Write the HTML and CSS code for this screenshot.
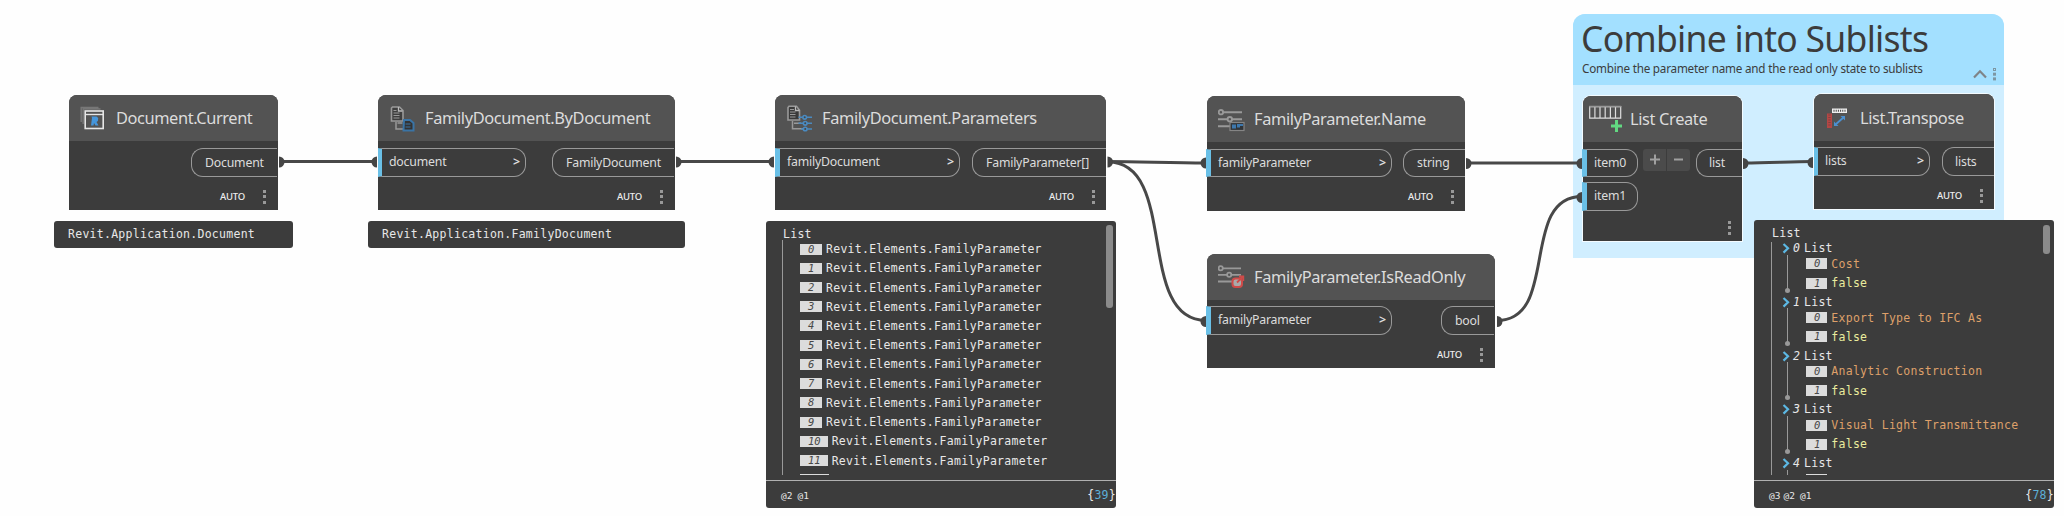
FILE: index.html
```
<!DOCTYPE html>
<html lang="en">
<head>
<meta charset="utf-8">
<title>Graph</title>
<link rel="stylesheet" href="styles.css">
</head>
<body>
<main class="canvas">
  <section class="group">
    <header class="group-head">
      <h1>Combine into Sublists</h1>
      <p>Combine the parameter name and the read only state to sublists</p>
      <svg class="group-tools" width="26" height="14" viewBox="0 0 26 14" fill="none"><path d="M1 9.500l6-6.200 6 6.200" stroke="#7f8488" stroke-width="2.200"/><g stroke="#7d97a3"><rect x="20.500" y=".5" width="2" height="2"/><rect x="20.500" y="5.200" width="2" height="2"/><rect x="20.500" y="9.900" width="2" height="2"/></g></svg>
    </header>
  </section>

  <svg class="wires" width="2064" height="516" viewBox="0 0 2064 516" fill="none">
    <g stroke="#484848" stroke-width="3">
      <path d="M280 161.500H377"/>
      <path d="M677 161.500H774"/>
      <path d="M1108 161.500C1140 161.500 1170 163 1206 163"/>
      <path d="M1108 162C1179 162 1135 320.500 1206 320.500"/>
      <path d="M1467 163H1582"/>
      <path d="M1497 320.500C1560 320.500 1519 196.500 1582 196.500"/>
      <path d="M1744 163C1770 163 1790 161.500 1813 161.500"/>
    </g>
    <g fill="#454545">
      <path d="M279 156.500a5.500 5.500 0 0 1 0 11z"/><path d="M377 156.500a5.500 5.500 0 0 0 0 11z"/>
      <path d="M676 156.500a5.500 5.500 0 0 1 0 11z"/><path d="M774 156.500a5.500 5.500 0 0 0 0 11z"/>
      <path d="M1107.500 156.500a5.500 5.500 0 0 1 0 11z"/><path d="M1206 157.500a5.500 5.500 0 0 0 0 11z"/>
      <path d="M1466 158a5.500 5.500 0 0 1 0 11z"/><path d="M1206 316a5.500 5.500 0 0 0 0 11z"/>
      <path d="M1497 316a5.500 5.500 0 0 1 0 11z"/><path d="M1582 158a5.500 5.500 0 0 0 0 11z"/>
      <path d="M1582 192a5.500 5.500 0 0 0 0 11z"/><path d="M1743 158a5.500 5.500 0 0 1 0 11z"/>
      <path d="M1813 157a5.500 5.500 0 0 0 0 11z"/>
    </g>
  </svg>

  <article class="node n-current">
    <header class="head">
      <svg class="icon" width="28" height="28" viewBox="0 0 28 28" fill="none"><path d="M1.200 18V3.500H18.500M3.200 20V5H20.500" stroke="#777" stroke-width="1.500"/><rect x="5.200" y="7" width="18" height="17.500" stroke="#e6e6e6" stroke-width="1.600"/><path d="M5.500 10.500h18" stroke="#e6e6e6" stroke-width="1.400"/><path d="M11 21.500l1-7.500-.5-1.500h5l1.700 1.500-.3 3-1.400 1 2 3.500h-3l-1.500-2.500-.5 2.500z" fill="#4596dc"/></svg>
      <h2>Document.Current</h2>
    </header>
    <div class="ports"><span class="port out"><span>Document</span></span></div>
    <footer class="foot"><span>AUTO</span><i class="dots"></i></footer>
  </article>
  <div class="preview p-current">Revit.Application.Document</div>

  <article class="node n-bydoc">
    <header class="head">
      <svg class="icon" width="28" height="28" viewBox=".5 -1 28 28" fill="none"><path d="M4 2h7l3.500 3.500V16H3V3z" fill="#3e3e3e" stroke="#999" stroke-width="1.600"/><path d="M10 2v4h4" stroke="#bbb" stroke-width="1.300"/><path d="M5 5.500h3M5 8h6M5 10.500h6M5 13h6" stroke="#999"/><path d="M7.500 17v7h7M9 18h5" stroke="#999" stroke-width="1.500"/><path d="M15.500 15h6l3.500 3v7.500H15z" fill="#333" stroke="#3a74a5" stroke-width="2"/><path d="M17 19h5M17 22h5" stroke="#3a74a5"/></svg>
      <h2>FamilyDocument.ByDocument</h2>
    </header>
    <div class="ports"><span class="port in"><span>document</span><b>&gt;</b></span><span class="port out"><span>FamilyDocument</span></span></div>
    <footer class="foot"><span>AUTO</span><i class="dots"></i></footer>
  </article>
  <div class="preview p-bydoc">Revit.Application.FamilyDocument</div>

  <article class="node n-params">
    <header class="head">
      <svg class="icon" width="28" height="28" viewBox="0 0 28 28" fill="none"><path d="M3 2.200h7.500l3 4V16H2V3.500z" fill="#3a3a3a" stroke="#999" stroke-width="1.600"/><path d="M9.500 2.500v4h4" stroke="#bbb" stroke-width="1.300"/><path d="M4 5.500h4M4 8h5.500M4 10.500h5.500M4 13h5.500" stroke="#999"/><path d="M6.500 17v7.800H17M8 19.300h7" stroke="#999" stroke-width="1.500"/><g stroke="#4a8ac0" stroke-width="1.600"><path d="M12.500 13.300h13.500M12.500 19.300h13.500M15 25h11"/><g fill="#454545"><circle cx="18.700" cy="13.300" r="1.800"/><circle cx="19.200" cy="19.300" r="1.800"/><circle cx="19.200" cy="25" r="1.800"/></g></g></svg>
      <h2>FamilyDocument.Parameters</h2>
    </header>
    <div class="ports"><span class="port in"><span>familyDocument</span><b>&gt;</b></span><span class="port out"><span>FamilyParameter[]</span></span></div>
    <footer class="foot"><span>AUTO</span><i class="dots"></i></footer>
  </article>
  <section class="watch w-params">
    <div class="watch-body">
      <div class="root">List</div>
      <ul class="tree">
        <li><em>0</em>Revit.Elements.FamilyParameter</li>
        <li><em>1</em>Revit.Elements.FamilyParameter</li>
        <li><em>2</em>Revit.Elements.FamilyParameter</li>
        <li><em>3</em>Revit.Elements.FamilyParameter</li>
        <li><em>4</em>Revit.Elements.FamilyParameter</li>
        <li><em>5</em>Revit.Elements.FamilyParameter</li>
        <li><em>6</em>Revit.Elements.FamilyParameter</li>
        <li><em>7</em>Revit.Elements.FamilyParameter</li>
        <li><em>8</em>Revit.Elements.FamilyParameter</li>
        <li><em>9</em>Revit.Elements.FamilyParameter</li>
        <li><em>10</em>Revit.Elements.FamilyParameter</li>
        <li><em>11</em>Revit.Elements.FamilyParameter</li>
        <li class="last"><em></em></li>
      </ul>
      <i class="thumb tall"></i>
    </div>
    <footer class="watch-foot"><span class="levels"><span>@2</span><span>@1</span></span><span>{<b>39</b>}</span></footer>
  </section>

  <article class="node n-name">
    <header class="head">
      <svg class="icon" width="28" height="28" viewBox="0 -3 28 28" fill="none"><g stroke="#999" stroke-width="1.900"><path d="M5 4.200h19M0 11.200h9M14 11.200h10M0 18.200h12"/><circle cx="2.900" cy="4.200" r="2.200"/><circle cx="11.800" cy="11.200" r="2.200"/></g><rect x="12" y="14.500" width="14" height="8" fill="#303438" stroke="#858585" stroke-width="1.200"/><path d="M14 16.500h4v4h-4zM19 16h6v2h-3v1.500h-3z" fill="#3e78ad"/></svg>
      <h2>FamilyParameter.Name</h2>
    </header>
    <div class="ports"><span class="port in"><span>familyParameter</span><b>&gt;</b></span><span class="port out"><span>string</span></span></div>
    <footer class="foot"><span>AUTO</span><i class="dots"></i></footer>
  </article>

  <article class="node n-ro">
    <header class="head">
      <svg class="icon" width="28" height="28" viewBox="0 -2 28 28" fill="none"><g stroke="#999" stroke-width="1.800"><path d="M5 3.300h18M0 9.800h9M13.500 9.800H23M0 16.500h14"/><circle cx="2.700" cy="3.300" r="2.100"/><circle cx="11.200" cy="9.800" r="2.100"/></g><rect x="14.500" y="13.500" width="9.500" height="8.500" rx="3" fill="#aaa" stroke="#cf4b49" stroke-width="2"/><path d="M19 17.500l6-6M21 11.500h4.300v4.500" stroke="#cf4b49" stroke-width="1.800"/></svg>
      <h2>FamilyParameter.IsReadOnly</h2>
    </header>
    <div class="ports"><span class="port in"><span>familyParameter</span><b>&gt;</b></span><span class="port out"><span>bool</span></span></div>
    <footer class="foot"><span>AUTO</span><i class="dots"></i></footer>
  </article>

  <article class="node n-create">
    <header class="head">
      <svg class="icon" width="34" height="28" viewBox="0 0 34 28" fill="none"><path d="M.7 1.700h31v11.500H.7zM5.900 1.700v11M11 1.700v11M16.200 1.700v11M21.400 1.700v11M26.500 1.700v11" stroke="#dedede" stroke-width="1.200"/><path d="M.2 1.500h32" stroke="#999" stroke-width="1.600"/><path d="M27.500 15v12M22 21h11" stroke="#62d881" stroke-width="3"/></svg>
      <h2>List Create</h2>
    </header>
    <div class="ports">
      <div class="stack"><span class="port in"><span>item0</span></span><span class="port in"><span>item1</span></span></div>
      <div class="step"><svg width="23" height="22"><path d="M7 10.500h10M12 5.500v10" stroke="#a0a0a0" stroke-width="2"/></svg><svg width="23" height="22"><path d="M7 10.500h9" stroke="#a0a0a0" stroke-width="2"/></svg></div>
      <span class="port out"><span>list</span></span>
    </div>
    <footer class="foot"><i class="dots"></i></footer>
  </article>

  <article class="node n-transpose">
    <header class="head">
      <svg class="icon" width="28" height="28" viewBox="0 -3.500 28 28" fill="none"><rect x="5" y="1" width="15" height="4.500" fill="#eee"/><path d="M6.500 3.200h12" stroke="#444" stroke-width="2" stroke-dasharray="1 1.200"/><rect x="0" y="6" width="5" height="14.500" fill="#b34745"/><path d="M2.500 7v12" stroke="#84403f" stroke-width="2.400" stroke-dasharray="1 1.500"/><path d="M8 17.500l9-8" stroke="#4b90d0" stroke-width="1.800"/><path d="M13.500 8.500h4.500v4.500zM7 14v4.500h4.500z" fill="#4b90d0"/></svg>
      <h2>List.Transpose</h2>
    </header>
    <div class="ports"><span class="port in"><span>lists</span><b>&gt;</b></span><span class="port out"><span>lists</span></span></div>
    <footer class="foot"><span>AUTO</span><i class="dots"></i></footer>
  </article>
  <section class="watch w-transpose">
    <div class="watch-body">
      <div class="root">List</div>
      <div class="tree nested">
        <div class="branch">
          <div class="label"><svg width="8" height="11"><path d="M1.500 1l4.500 4.300-4.500 4.300" fill="none" stroke="#5cb8e4" stroke-width="2.200"/></svg><i>0</i>List</div>
          <ul><li class="str"><em>0</em>Cost</li><li class="bool"><em>1</em>false</li></ul>
        </div>
        <div class="branch">
          <div class="label"><svg width="8" height="11"><path d="M1.500 1l4.500 4.300-4.500 4.300" fill="none" stroke="#5cb8e4" stroke-width="2.200"/></svg><i>1</i>List</div>
          <ul><li class="str"><em>0</em>Export Type to IFC As</li><li class="bool"><em>1</em>false</li></ul>
        </div>
        <div class="branch">
          <div class="label"><svg width="8" height="11"><path d="M1.500 1l4.500 4.300-4.500 4.300" fill="none" stroke="#5cb8e4" stroke-width="2.200"/></svg><i>2</i>List</div>
          <ul><li class="str"><em>0</em>Analytic Construction</li><li class="bool"><em>1</em>false</li></ul>
        </div>
        <div class="branch">
          <div class="label"><svg width="8" height="11"><path d="M1.500 1l4.500 4.300-4.500 4.300" fill="none" stroke="#5cb8e4" stroke-width="2.200"/></svg><i>3</i>List</div>
          <ul><li class="str"><em>0</em>Visual Light Transmittance</li><li class="bool"><em>1</em>false</li></ul>
        </div>
        <div class="branch">
          <div class="label"><svg width="8" height="11"><path d="M1.500 1l4.500 4.300-4.500 4.300" fill="none" stroke="#5cb8e4" stroke-width="2.200"/></svg><i>4</i>List</div>
          <ul><li><em></em></li></ul>
        </div>
      </div>
      <i class="thumb"></i>
    </div>
    <footer class="watch-foot"><span class="levels"><span>@3</span><span>@2</span><span>@1</span></span><span>{<b>78</b>}</span></footer>
  </section>
</main>
</body>
</html>
```
FILE: styles.css
```
* { box-sizing: border-box; margin: 0; padding: 0; }
body { background: #fefefe; font-family: "Noto Sans", sans-serif; }
ul { list-style: none; }
.canvas { position: relative; width: 2064px; height: 516px; overflow: hidden; }
.wires { position: absolute; left: 0; top: 0; }

.group { position: absolute; left: 1573px; top: 14px; width: 431px; height: 244px; background: #d0eeff; border-radius: 12px 12px 0 0; }
.group-head { position: relative; height: 71px; padding: 1px 0 0 8px; background: #a3e0ff; border-radius: 12px 12px 0 0; color: #3c3c3c; white-space: nowrap; }
.group-head h1 { font-size: 35.5px; font-weight: 400; line-height: 46px; letter-spacing: -0.72px; }
.group-head p { font-size: 11.7px; line-height: 14px; letter-spacing: -0.22px; padding-left: 1px; }
.group-tools { position: absolute; right: 5px; top: 54px; }

.node { position: absolute; display: flex; flex-direction: column; width: 209px; height: 115px; background: #3c3c3c; border-radius: 8px 8px 0 0; color: #dcdcdc; }
.head { display: flex; align-items: center; height: 46px; flex: none; background: #535353; border-radius: 8px 8px 0 0; padding-left: 11px; }
.icon { flex: none; margin-right: 8px; }
.head h2 { font-size: 16.4px; font-weight: 400; line-height: 22px; white-space: nowrap; letter-spacing: -0.36px; }
.ports { display: flex; justify-content: space-between; align-items: flex-start; padding-top: 7px; }
.port { display: flex; align-items: center; height: 29px; border: 1px solid #999; font-size: 12.3px; line-height: 16px; letter-spacing: -0.2px; white-space: nowrap; }
.port.in { justify-content: space-between; border-left: 4px solid #6ac0e7; border-radius: 0 12px 12px 0; padding: 0 5px 1px 7px; }
.port.out { margin-left: auto; margin-right: 1px; border-right: 0; border-radius: 12px 0 0 12px; padding: 0 0 0 13px; }
.port b { font-weight: 600; font-size: 12.5px; }
.foot { display: flex; justify-content: flex-end; align-items: center; gap: 18px; padding: 5px 12px 0 0; font-size: 9.5px; font-weight: 500; line-height: 29px; letter-spacing: -0.2px; color: #eee; }
.dots { width: 3px; height: 14px; background: linear-gradient(#999 3px, transparent 3px 5px, #999 5px 8px, transparent 8px 11px, #999 11px); }

.n-current { left: 69px; top: 95px; }
.n-current .head h2 { letter-spacing: -0.42px; }
.n-current .out { width: 86px; }
.n-bydoc { left: 378px; top: 95px; width: 297px; }
.n-bydoc .in { width: 148px; }
.n-bydoc .out { width: 122px; }
.n-params { left: 775px; top: 95px; width: 331px; }
.n-params .in { width: 185px; border-left-width: 5px; }
.n-params .out { width: 134px; margin-right: 0; }
.n-params .foot { padding-right: 11px; }
.n-name { left: 1207px; top: 96px; width: 258px; }
.n-name .in, .n-ro .in { width: 186px; margin-left: -1px; border-left-width: 5px; }
.n-name .out { width: 62px; margin-right: 0; }
.n-name .port { height: 28px; }
.n-name .foot { padding-right: 11px; }
.n-ro { left: 1207px; top: 254px; width: 288px; height: 114px; }
.n-ro .ports { padding-top: 6px; }
.n-ro .out { width: 53px; }
.n-create { left: 1583px; top: 96px; width: 159px; height: 145px; box-shadow: 0 0 0 1px #f4fbff; }
.n-create .head { padding-left: 6px; }
.n-create .icon { margin-right: 7px; }
.n-create .port { height: 28px; }
.n-create .port + .port { height: 29px; }
.n-create .in { width: 56px; margin-left: -1px; border-left-width: 5px; }
.n-create .out { width: 46px; margin-right: 0; padding-left: 12px; }
.n-create .foot { line-height: 14px; padding-top: 9px; padding-right: 11px; height: 25px; }
.stack { display: flex; flex-direction: column; gap: 5px; }
.step { display: flex; gap: 1px; margin-left: 5px; }
.step svg { background: #4b4b4b; border-radius: 3px 0 0 3px; }
.step svg + svg { border-radius: 0 3px 3px 0; }
.n-transpose { left: 1814px; top: 94px; width: 180px; box-shadow: 0 0 0 1px #f4fbff; }
.n-transpose .head { height: 47px; padding-left: 13px; }
.n-transpose .icon { margin-right: 5px; }
.n-transpose .ports { padding-top: 6px; }
.n-transpose .in { width: 116px; }
.n-transpose .out { width: 52px; margin-right: 0; padding-left: 12px; }
.n-transpose .foot { padding-right: 11px; }

.preview, .watch { position: absolute; background: #3c3c3c; color: #e8e8e8; font: 11.5px/19px "DejaVu Sans Mono", monospace; letter-spacing: 0.27px; white-space: nowrap; border-radius: 3px; }
.preview { top: 221px; height: 27px; padding: 4px 0 0 14px; }
.p-current { left: 54px; width: 239px; }
.p-bydoc { left: 368px; width: 317px; }
.watch { top: 220px; width: 300px; height: 288px; display: flex; flex-direction: column; }
.watch-body { position: relative; height: 255px; padding: 4px 0 0 18px; overflow: hidden; }
.w-params { left: 766px; top: 221px; width: 350px; height: 287px; }
.w-params .watch-body { height: 254px; padding-left: 17px; }
.root { line-height: 18px; }
.tree { border-left: 1px solid #999; margin-left: -1px; }
.w-params .tree { padding-left: 17px; margin-top: -3px; height: 240px; }
.tree li { display: flex; align-items: center; height: 19.22px; }
.tree em { flex: none; min-width: 22px; height: 11px; margin-right: 4px; padding: 0 7px 0 8px; background: #dcdcdc; color: #484848; line-height: 11px; letter-spacing: 0; font-size: 10.5px; margin-top: -1px; }
.tree .last em { width: 29px; }
.nested { height: 240px; padding-left: 10px; }
.branch { height: 53.8px; }
.label { display: flex; align-items: center; height: 13px; line-height: 13px; }
.label i { width: 11px; margin: 0 0 0 3px; }
.branch ul { position: relative; margin-left: 5px; height: 37px; padding-left: 18px; border-left: 1px solid #999; }
.branch ul::after { content: ""; position: absolute; left: -3px; bottom: -1px; width: 5px; height: 5px; border-radius: 50%; background: #999; }
.branch em { min-width: 21px; }
.branch li { height: 19.7px; margin-top: -0.500px; }
.str { color: #dea06a; }
.bool { color: #eaec9e; }
.thumb { position: absolute; right: 4px; top: 5px; width: 7px; height: 29px; border-radius: 3px; background: #8b8b8b; }
.thumb.tall { right: 3px; top: 4px; height: 83px; }
.watch-foot { display: flex; justify-content: space-between; align-items: center; height: 28px; margin-top: 5px; padding: 2px 0 0 15px; border-top: 1px solid #b0b0b0; }
.watch-foot b { color: #5cb0d8; font-weight: 400; }
.levels { display: flex; gap: 5px; font-size: 9.500px; letter-spacing: 0; }
.w-transpose .levels span:nth-child(2) { margin-left: -2px; }
.w-transpose { left: 1754px; }
```
